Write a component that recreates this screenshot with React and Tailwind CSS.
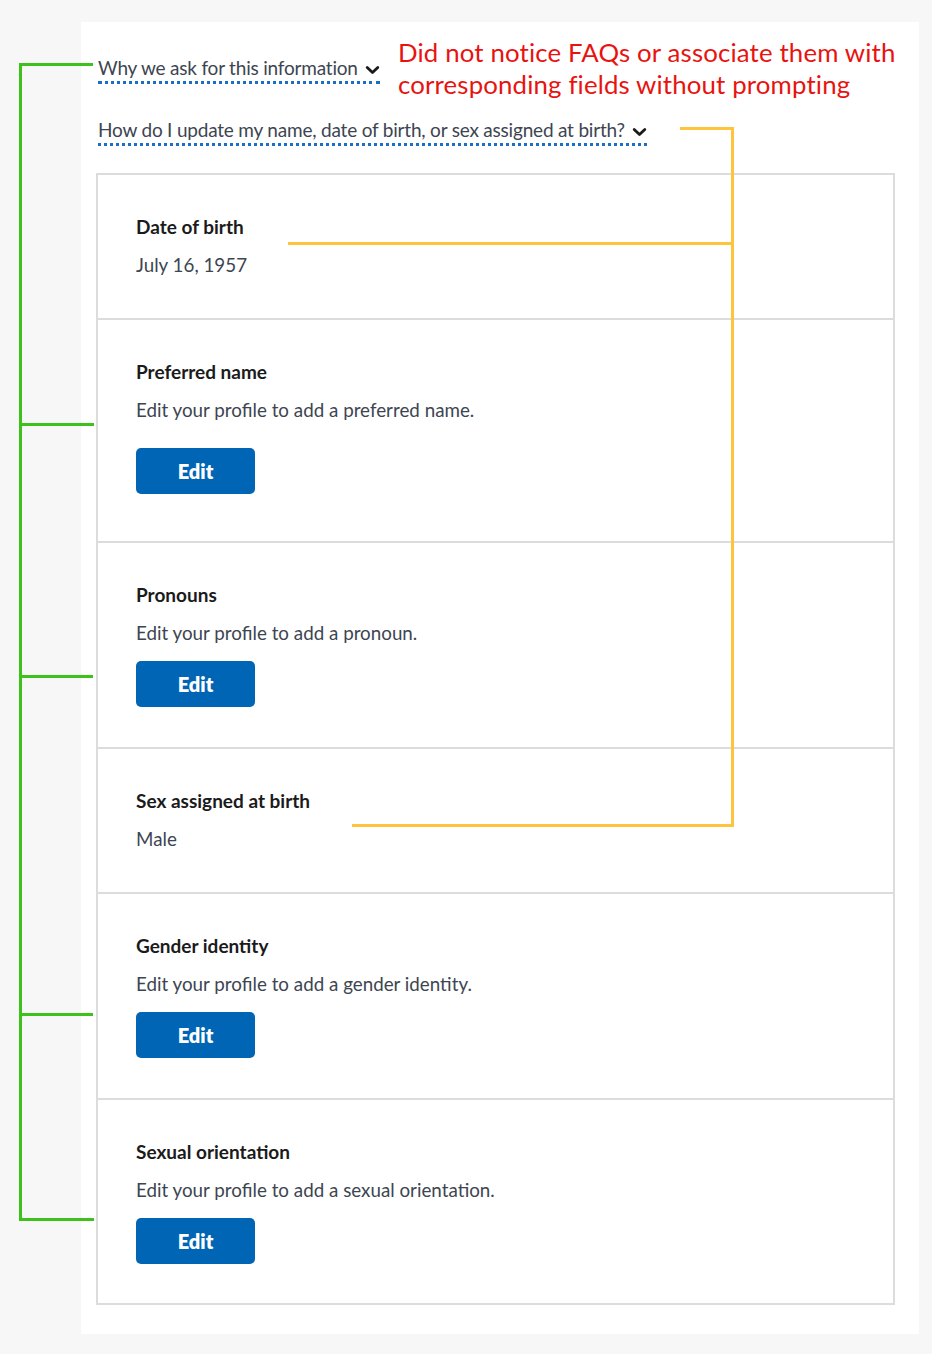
const sections = [
  { title: 'Date of birth', text: 'July 16, 1957', h: 'h-[145px]' },
  { title: 'Preferred name', text: 'Edit your profile to add a preferred name.', edit: true, h: 'h-[223px]', gap: 'mt-[24px]' },
  { title: 'Pronouns', text: 'Edit your profile to add a pronoun.', edit: true, h: 'h-[206px]', gap: 'mt-[14px]' },
  { title: 'Sex assigned at birth', text: 'Male', h: 'h-[145px]' },
  { title: 'Gender identity', text: 'Edit your profile to add a gender identity.', edit: true, h: 'h-[206px]', gap: 'mt-[14px]' },
  { title: 'Sexual orientation', text: 'Edit your profile to add a sexual orientation.', edit: true, h: 'h-[203px]', gap: 'mt-[14px]' },
]

function Chevron() {
  return (
    <svg width="15" height="10" viewBox="0 0 15 10" className="ml-[7px] mt-[3px]">
      <path d="M2.2 2.5 L7.5 7.6 L12.8 2.5" fill="none" stroke="#1b1b1b" strokeWidth="2.8" strokeLinecap="round" strokeLinejoin="round" />
    </svg>
  )
}

function FaqLink({ children }) {
  return (
    <div className="inline-flex items-center border-b-[3px] border-dotted border-[#1a6fc4] pb-[2px] text-[19px] leading-[22px] text-[#3d4551] tracking-[-0.2px]">
      {children}
      <Chevron />
    </div>
  )
}

function Section({ s, last }) {
  return (
    <div className={`${s.h} pl-[38px] pt-[38px] ${last ? '' : 'border-b-2 border-[#dcdcdc]'}`}>
      <h3 className="text-[19px] leading-[28px] font-bold text-[#1b1b1b]">{s.title}</h3>
      <p className="mt-[10px] text-[18.8px] leading-[28px] text-[#3d4551]">{s.text}</p>
      {s.edit && (
        <button className={`${s.gap} w-[119px] h-[46px] rounded-[5px] bg-[#0065b5] text-white text-[20px] font-extrabold`}>
          Edit
        </button>
      )}
    </div>
  )
}

export default function App() {
  return (
    <div className="relative w-[932px] h-[1354px] bg-[#f7f7f7] pt-[22px] pl-[81px] font-['Lato','Noto_Sans',sans-serif]">
      <div className="w-[838px] h-[1312px] bg-white pt-[35px]">
        <div className="flex flex-col items-start gap-[35px] pl-[17px]">
          <FaqLink>Why we ask for this information</FaqLink>
          <FaqLink>How do I update my name, date of birth, or sex assigned at birth?</FaqLink>
        </div>
        <div className="ml-[15px] mt-[27px] w-[799px] border-2 border-[#dcdcdc]">
          {sections.map((s, i) => (
            <Section key={s.title} s={s} last={i === sections.length - 1} />
          ))}
        </div>
      </div>

      {/* annotation */}
      <p className="absolute left-[398px] top-[36px] text-[25.8px] leading-[32px] text-[#e8130f] tracking-[0.15px]">
        Did not notice FAQs or associate them with
        <br />
        corresponding fields without prompting
      </p>

      {/* green bracket */}
      <div className="absolute left-[19px] top-[63px] w-[3px] h-[1158px] bg-[#3cc21a]" />
      <div className="absolute left-[19px] top-[63px] w-[74px] h-[3px] bg-[#3cc21a]" />
      <div className="absolute left-[19px] top-[423px] w-[75px] h-[3px] bg-[#3cc21a]" />
      <div className="absolute left-[19px] top-[675px] w-[74px] h-[3px] bg-[#3cc21a]" />
      <div className="absolute left-[19px] top-[1013px] w-[74px] h-[3px] bg-[#3cc21a]" />
      <div className="absolute left-[19px] top-[1218px] w-[75px] h-[3px] bg-[#3cc21a]" />

      {/* yellow connectors */}
      <div className="absolute left-[680px] top-[127px] w-[54px] h-[3px] bg-[#fdc43c]" />
      <div className="absolute left-[731px] top-[127px] w-[3px] h-[700px] bg-[#fdc43c]" />
      <div className="absolute left-[288px] top-[242px] w-[446px] h-[3px] bg-[#fdc43c]" />
      <div className="absolute left-[352px] top-[824px] w-[382px] h-[3px] bg-[#fdc43c]" />
    </div>
  )
}
